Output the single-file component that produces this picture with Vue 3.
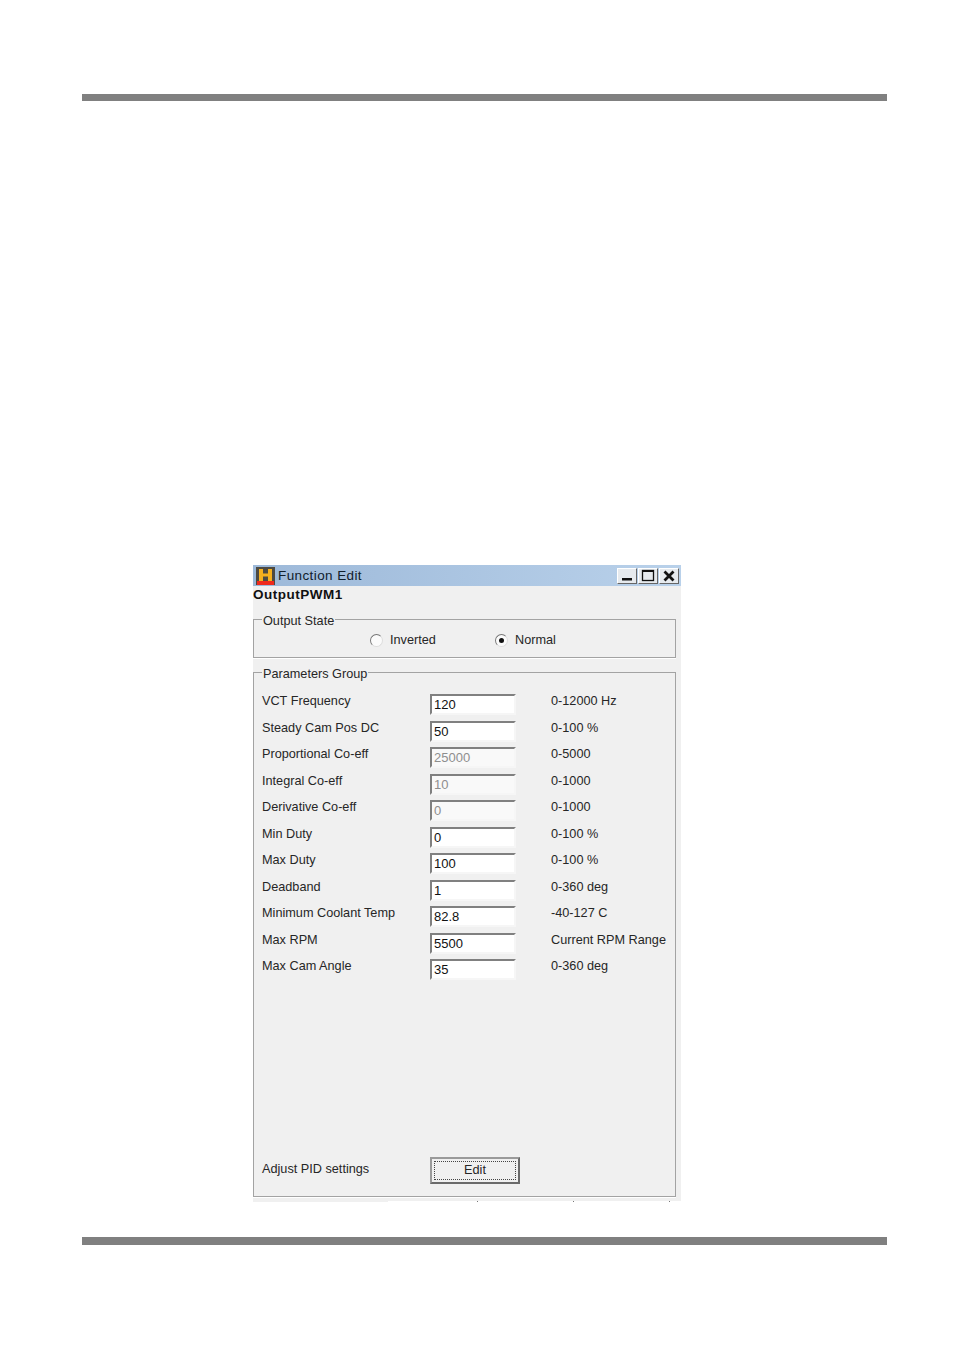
<script setup>
const rows = [
  { label: 'VCT Frequency', value: '120', range: '0-12000 Hz' },
  { label: 'Steady Cam Pos DC', value: '50', range: '0-100 %' },
  { label: 'Proportional Co-eff', value: '25000', range: '0-5000', disabled: true },
  { label: 'Integral Co-eff', value: '10', range: '0-1000', disabled: true },
  { label: 'Derivative Co-eff', value: '0', range: '0-1000', disabled: true },
  { label: 'Min Duty', value: '0', range: '0-100 %' },
  { label: 'Max Duty', value: '100', range: '0-100 %' },
  { label: 'Deadband', value: '1', range: '0-360 deg' },
  { label: 'Minimum Coolant Temp', value: '82.8', range: '-40-127 C' },
  { label: 'Max RPM', value: '5500', range: 'Current RPM Range' },
  { label: 'Max Cam Angle', value: '35', range: '0-360 deg' }
]
</script>

<template>
  <div class="page">
    <div class="rule rule-top"></div>
    <section class="window">
      <header class="titlebar">
        <svg class="logo" width="19" height="18" viewBox="0 0 19 18">
          <rect width="19" height="18" fill="#4d4a42" />
          <rect x="1" y="14" width="17" height="4" fill="#ee2a1c" />
          <path d="M3 2h4v4.500h5V2h4v12h-4V9.500H7V14H3z" fill="#f5b01e" />
        </svg>
        <span class="title">Function Edit</span>
        <div class="controls">
          <span class="ctl"><svg width="18" height="14" viewBox="0 0 18 14"><rect x="4" y="9" width="10" height="2.500" fill="#111" /></svg></span>
          <span class="ctl"><svg width="18" height="14" viewBox="0 0 18 14"><rect x="3.500" y="1.500" width="11" height="10" fill="none" stroke="#111" stroke-width="1.300" /><rect x="3" y="1" width="12" height="2" fill="#111" /></svg></span>
          <span class="ctl"><svg width="18" height="14" viewBox="0 0 18 14"><path d="M4.500 2.500l9 9M13.500 2.500l-9 9" stroke="#111" stroke-width="2.800" fill="none" /></svg></span>
        </div>
      </header>
      <div class="body">
        <div class="name">OutputPWM1</div>
        <fieldset class="group state">
          <legend>Output State</legend>
          <div class="radios">
            <label class="radio r1"><span class="dot"></span>Inverted</label>
            <label class="radio r2"><span class="dot on"></span>Normal</label>
          </div>
        </fieldset>
        <fieldset class="group params">
          <legend>Parameters Group</legend>
          <div class="grid">
            <div v-for="r in rows" :key="r.label" class="row">
              <span class="label">{{ r.label }}</span>
              <span class="input" :class="{ disabled: r.disabled }">{{ r.value }}</span>
              <span class="range">{{ r.range }}</span>
            </div>
          </div>
          <div class="pid">
            <span class="label">Adjust PID settings</span>
            <button class="edit" type="button"><span class="focus">Edit</span></button>
          </div>
        </fieldset>
      </div>
      <div class="strip">
        <span class="strip-fill"></span>
        <span class="tick t1"></span>
        <span class="tick t2"></span>
        <span class="tick t3"></span>
      </div>
    </section>
    <div class="rule rule-bottom"></div>
  </div>
</template>

<style scoped>
.page {
  width: 954px;
  height: 1350px;
  box-sizing: border-box;
  padding-top: 94px;
  background: #fff;
  font-family: "Liberation Sans", Arial, sans-serif;
  font-size: 12.700px;
  color: #262626;
  overflow: hidden;
}
.rule {
  margin-left: 82px;
  width: 805px;
  background: #808080;
}
.rule-top { height: 7px; }
.rule-bottom { height: 8px; margin-top: 35px; }
.window {
  margin: 464px 0 0 253px;
  width: 428px;
  height: 637px;
  background: #f0f0f0;
  display: flex;
  flex-direction: column;
}
.titlebar {
  height: 21px;
  flex: none;
  display: flex;
  align-items: center;
  padding: 0 2px 0 3px;
  background: linear-gradient(90deg, #9db9d9, #b9d1ea);
}
.logo { flex: none; }
.title {
  margin-left: 3px;
  font-size: 13.500px;
  letter-spacing: 0.400px;
  color: #10202c;
}
.controls {
  margin-left: auto;
  display: flex;
  gap: 1px;
  margin-top: 1px;
}
.ctl {
  width: 20px;
  height: 16px;
  box-sizing: border-box;
  background: #e6eaee;
  border: 1px solid;
  border-color: #fff #666 #666 #fff;
  display: flex;
  align-items: center;
  justify-content: center;
  overflow: hidden;
}
.body {
  flex: 1;
  min-height: 0;
  display: flex;
  flex-direction: column;
  padding: 0 5px 4px 0;
}
.name {
  height: 17px;
  line-height: 17px;
  font-weight: 700;
  font-size: 13.500px;
  color: #111;
  letter-spacing: 0.500px;
}
.group {
  margin: 0;
  padding: 0;
  min-width: 0;
  border: 1px solid #a3a3a3;
  border-radius: 0;
  box-shadow: 0 1px 0 #fff;
}
legend {
  margin-left: 8px;
  padding: 3px 1px 0;
  line-height: 15px;
  position: relative;
  top: 1px;
}
.state {
  margin-top: 7px;
  height: 48px;
  box-sizing: border-box;
  flex: none;
}
.radios {
  position: relative;
  height: 24px;
}
.radio {
  position: absolute;
  top: 2px;
  display: flex;
  align-items: center;
  gap: 7px;
  height: 20px;
}
.r1 { left: 116px; }
.r2 { left: 241px; }
.dot {
  width: 13px;
  height: 13px;
  box-sizing: border-box;
  border-radius: 50%;
  border: 1px solid;
  border-color: #777 #ddd #ddd #777;
  background: #fbfbfb;
  position: relative;
}
.dot.on::after {
  content: "";
  position: absolute;
  left: 3px;
  top: 3px;
  width: 5px;
  height: 5px;
  border-radius: 50%;
  background: #111;
}
.params {
  margin-top: 5px;
  flex: 1;
  min-height: 0;
  display: flex;
  flex-direction: column;
}
.grid {
  padding: 13px 0 0 8px;
}
.row {
  display: grid;
  grid-template-columns: 168px 86px 1fr;
  height: 26.500px;
  align-items: start;
}
.row .label,
.row .range {
  line-height: 15px;
}
.range {
  margin-left: 35px;
  white-space: nowrap;
}
.input {
  box-sizing: border-box;
  height: 21px;
  width: 86px;
  padding: 1px 0 0 2px;
  font-size: 13px;
  line-height: 15px;
  background: #fff;
  border: 2px solid;
  border-color: #808080 #f6f6f6 #f6f6f6 #808080;
  color: #111;
}
.input.disabled {
  background: #f9f9f9;
  color: #8e8e8e;
}
.pid {
  margin-top: auto;
  padding: 0 0 12px 8px;
  display: flex;
  align-items: center;
}
.pid .label {
  width: 168px;
  margin-bottom: 3px;
}
.edit {
  width: 90px;
  height: 27px;
  padding: 2px;
  background: #f0f0f0;
  border: 2px solid;
  border-color: #9a9a9a #6a6a6a #6a6a6a #9a9a9a;
  font: inherit;
  color: inherit;
  display: flex;
}
.focus {
  flex: 1;
  border: 1px dotted #444;
  line-height: 17px;
  text-align: center;
}
.strip {
  height: 1px;
  flex: none;
  display: flex;
  background: #fff;
}
.strip-fill {
  width: 135px;
  background: #f0f0f0;
}
.tick {
  width: 1px;
  background: #777;
}
.t1 { margin-left: 89px; }
.t2 { margin-left: 95px; }
.t3 { margin-left: 95px; }
</style>
